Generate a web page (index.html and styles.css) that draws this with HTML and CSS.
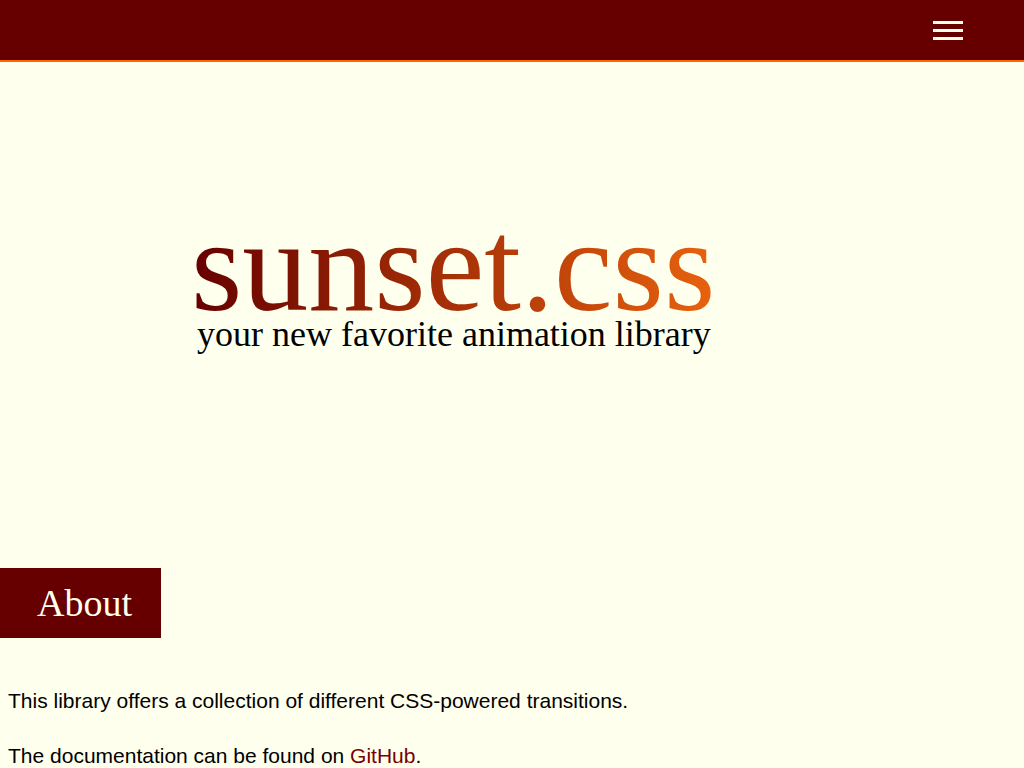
FILE: index.html
```html
<!DOCTYPE html>
<html>
<head>
<meta charset="utf-8">
<link rel="stylesheet" href="styles.css">
</head>
<body>
<header class="topbar">
  <button class="menu" aria-label="Menu">
    <span></span><span></span><span></span>
  </button>
</header>
<section class="hero">
  <div class="brand">
    <h1 class="title">sunset.css</h1>
    <p class="tagline">your new favorite animation library</p>
  </div>
</section>
<main class="content">
  <h2 class="section-title">About</h2>
  <p class="text">This library offers a collection of different CSS-powered transitions.</p>
  <p class="text">The documentation can be found on <a href="#">GitHub</a>.</p>
</main>
</body>
</html>
```

FILE: styles.css
```css
html, body {
  margin: 0;
  padding: 0;
  background: #ffffee;
}
body {
  font-family: "Liberation Serif", "Times New Roman", serif;
  color: #000;
}
.topbar {
  height: 60px;
  background: #660000;
  border-bottom: 2px solid #ff6600;
  display: flex;
  justify-content: flex-end;
  align-items: center;
  padding-right: 61px;
}
.menu {
  width: 30px;
  height: 19px;
  padding: 0;
  border: 0;
  background: transparent;
  display: flex;
  flex-direction: column;
  justify-content: space-between;
  margin-top: 1px;
}
.menu span {
  display: block;
  height: 3px;
  background: #ffffee;
}
.hero {
  height: 352px;
  padding: 154px 0 0 191px;
}
.brand {
  display: inline-block;
}
.title {
  margin: 0;
  font-size: 132px;
  font-weight: normal;
  line-height: 100px;
  background: linear-gradient(to right, #660000, #e8620e);
  -webkit-background-clip: text;
  background-clip: text;
  color: transparent;
}
.tagline {
  margin: 0 0 0 6px;
  font-size: 36px;
  line-height: 36px;
}
.content {
  padding: 0 8px;
}
.section-title {
  display: inline-block;
  margin: 0 0 0 -8px;
  padding: 0 29px 0 37px;
  height: 70px;
  line-height: 70px;
  background: #660000;
  color: #ffffee;
  font-size: 38px;
  font-weight: normal;
}
.text {
  font-family: "Liberation Sans", Arial, sans-serif;
  font-size: 21px;
  line-height: 24px;
  margin: 0;
}
.section-title + .text {
  margin-top: 51px;
}
.text + .text {
  margin-top: 31px;
}
.text a {
  color: #770000;
  text-decoration: none;
}
```
